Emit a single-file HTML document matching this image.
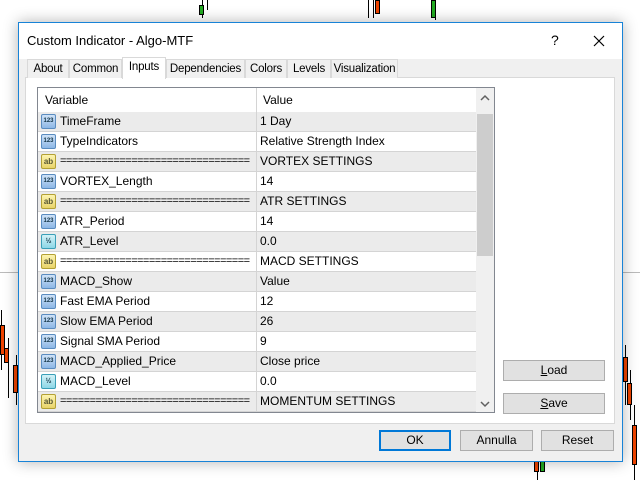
<!DOCTYPE html>
<html><head><meta charset="utf-8"><style>
*{box-sizing:border-box;margin:0;padding:0}
body{width:640px;height:480px;background:#fff;position:relative;overflow:hidden;font-family:"Liberation Sans",Arial,sans-serif;font-size:12px;color:#000}
.a{position:absolute}
.dlg{left:18px;top:22px;width:605px;height:440px;background:#f0f0f0;border:1px solid #1883d7;box-shadow:0 0 14px rgba(0,0,0,.3)}
.title{left:0;top:0;width:603px;height:36px;background:#fff}
.tab{top:36px;height:19px;border:1px solid #d9d9d9;border-bottom:none;background:#f0f0f0;text-align:center;line-height:18px;font-size:11.5px;letter-spacing:-0.2px;white-space:nowrap;overflow:hidden}
.panel{left:6px;top:54px;width:590px;height:347px;background:#fff;border:1px solid #d9d9d9}
.tbl{left:18px;top:64px;width:458px;height:326px;border:1px solid #828790;background:#fff;overflow:hidden}
.row{position:absolute;left:0;width:438px;height:20px;border-bottom:1px solid #d4d4d4;line-height:19px}
.row.g{background:#ebebeb}
.c1{position:absolute;left:22px;top:0;width:194px;overflow:hidden;white-space:nowrap}
.eq{font-size:11px;letter-spacing:-0.5px}
.c2{position:absolute;left:222px;top:0}
.dv{position:absolute;left:218px;top:0;width:1px;height:20px;background:#d4d4d4}
.ic{position:absolute;left:3px;top:2px;width:15px;height:15px;border:1px solid #5a8cc0;border-radius:2px;background:linear-gradient(#cfe2f7,#8db7e6);font-size:6px;font-weight:bold;color:#134;line-height:13px;text-align:center}
.ic.ab{border-color:#b3a034;background:linear-gradient(#fdf4b0,#e8d36a);font-size:8px;color:#553}
.ic.h{border-color:#3a9fb8;background:linear-gradient(#d3f2f7,#8dd6e6);font-size:7px}
.btn{height:21px;border:1px solid #adadad;background:#e1e1e1;text-align:center;line-height:19px}
.cd{position:absolute;width:5px;border:1px solid #000}
.wk{position:absolute;width:1px;background:#000}
</style></head><body>
<div class="a" style="left:0;top:272px;width:640px;height:1px;background:#bbb"></div>
<div class="wk" style="left:202px;top:0;height:18px"></div><div class="cd" style="left:199px;top:5px;height:10px;background:#2a2"></div>
<div class="wk" style="left:207px;top:0;height:10px"></div>
<div class="wk" style="left:368px;top:0;height:18px"></div><div class="wk" style="left:373px;top:0;height:18px"></div><div class="cd" style="left:375px;top:0;height:14px;background:#e40"></div>
<div class="wk" style="left:435px;top:0;height:20px"></div><div class="cd" style="left:431px;top:0;height:18px;background:#2a2"></div>
<div class="wk" style="left:1px;top:310px;height:60px"></div><div class="cd" style="left:0;top:325px;height:30px;background:#e40"></div>
<div class="wk" style="left:8px;top:338px;height:60px"></div><div class="cd" style="left:4px;top:348px;height:15px;background:#e40"></div>
<div class="wk" style="left:16px;top:355px;height:50px"></div><div class="cd" style="left:13px;top:365px;height:28px;background:#e40"></div>
<div class="wk" style="left:537px;top:455px;height:25px"></div><div class="cd" style="left:534px;top:460px;height:12px;background:#e40"></div>
<div class="cd" style="left:540px;top:460px;height:12px;background:#2a2"></div>
<div class="wk" style="left:625px;top:345px;height:60px"></div><div class="cd" style="left:623px;top:357px;height:25px;background:#e40"></div>
<div class="wk" style="left:630px;top:370px;height:50px"></div><div class="cd" style="left:627px;top:383px;height:22px;background:#e40"></div>
<div class="wk" style="left:634px;top:405px;height:75px"></div><div class="cd" style="left:632px;top:425px;height:40px;background:#e40"></div>

<div class="a dlg">
 <div class="a title"><span class="a" style="left:8px;top:10px;font-size:13px">Custom Indicator - Algo-MTF</span>
  <span class="a" style="left:532px;top:9px;font-size:14px">?</span>
  <svg class="a" style="left:574px;top:12px" width="12" height="12"><path d="M1 1L11 11M11 1L1 11" stroke="#000" stroke-width="1.2"/></svg>
 </div>
 <div class="a panel"></div>
 <div class="a tab" style="left:8px;width:42px">About</div>
 <div class="a tab" style="left:50px;width:53px">Common</div>
 <div class="a tab" style="left:147px;width:79px">Dependencies</div>
 <div class="a tab" style="left:226px;width:42px">Colors</div>
 <div class="a tab" style="left:268px;width:44px">Levels</div>
 <div class="a tab" style="left:312px;width:67px">Visualization</div>
 <div class="a tab" style="left:103px;top:34px;width:44px;height:22px;background:#fff;line-height:18px">Inputs</div>
 <div class="a tbl">
  <div class="row" style="top:0;height:24px;border-bottom:none;line-height:24px"><span class="c1" style="left:7px">Variable</span><div class="dv" style="height:24px"></div><span class="c2" style="left:225px">Value</span></div>
  <div class="row g" style="top:24px"><div class="ic">123</div><span class="c1">TimeFrame</span><div class="dv"></div><span class="c2">1 Day</span></div>
  <div class="row" style="top:44px"><div class="ic">123</div><span class="c1">TypeIndicators</span><div class="dv"></div><span class="c2">Relative Strength Index</span></div>
  <div class="row g" style="top:64px"><div class="ic ab">ab</div><span class="c1 eq">================================</span><div class="dv"></div><span class="c2">VORTEX SETTINGS</span></div>
  <div class="row" style="top:84px"><div class="ic">123</div><span class="c1">VORTEX_Length</span><div class="dv"></div><span class="c2">14</span></div>
  <div class="row g" style="top:104px"><div class="ic ab">ab</div><span class="c1 eq">================================</span><div class="dv"></div><span class="c2">ATR SETTINGS</span></div>
  <div class="row" style="top:124px"><div class="ic">123</div><span class="c1">ATR_Period</span><div class="dv"></div><span class="c2">14</span></div>
  <div class="row g" style="top:144px"><div class="ic h">½</div><span class="c1">ATR_Level</span><div class="dv"></div><span class="c2">0.0</span></div>
  <div class="row" style="top:164px"><div class="ic ab">ab</div><span class="c1 eq">================================</span><div class="dv"></div><span class="c2">MACD SETTINGS</span></div>
  <div class="row g" style="top:184px"><div class="ic">123</div><span class="c1">MACD_Show</span><div class="dv"></div><span class="c2">Value</span></div>
  <div class="row" style="top:204px"><div class="ic">123</div><span class="c1">Fast EMA Period</span><div class="dv"></div><span class="c2">12</span></div>
  <div class="row g" style="top:224px"><div class="ic">123</div><span class="c1">Slow EMA Period</span><div class="dv"></div><span class="c2">26</span></div>
  <div class="row" style="top:244px"><div class="ic">123</div><span class="c1">Signal SMA Period</span><div class="dv"></div><span class="c2">9</span></div>
  <div class="row g" style="top:264px"><div class="ic">123</div><span class="c1">MACD_Applied_Price</span><div class="dv"></div><span class="c2">Close price</span></div>
  <div class="row" style="top:284px"><div class="ic h">½</div><span class="c1">MACD_Level</span><div class="dv"></div><span class="c2">0.0</span></div>
  <div class="row g" style="top:304px"><div class="ic ab">ab</div><span class="c1 eq">================================</span><div class="dv"></div><span class="c2">MOMENTUM SETTINGS</span></div>
  <div class="a" style="left:438px;top:0;width:18px;height:324px;background:#f0f0f0"></div>
  <div class="a" style="left:439px;top:26px;width:16px;height:142px;background:#cdcdcd"></div>
  <svg class="a" style="left:442px;top:6px" width="10" height="8"><path d="M1 6L5 2L9 6" fill="none" stroke="#606060" stroke-width="1.5"/></svg>
  <svg class="a" style="left:442px;top:312px" width="10" height="8"><path d="M1 2L5 6L9 2" fill="none" stroke="#606060" stroke-width="1.5"/></svg>
 </div>
 <div class="a btn" style="left:484px;top:337px;width:102px"><u>L</u>oad</div>
 <div class="a btn" style="left:484px;top:370px;width:102px"><u>S</u>ave</div>
 <div class="a btn" style="left:360px;top:407px;width:72px;border:2px solid #0078d7;line-height:17px">OK</div>
 <div class="a btn" style="left:441px;top:407px;width:73px">Annulla</div>
 <div class="a btn" style="left:522px;top:407px;width:73px">Reset</div>
</div>
</body></html>
